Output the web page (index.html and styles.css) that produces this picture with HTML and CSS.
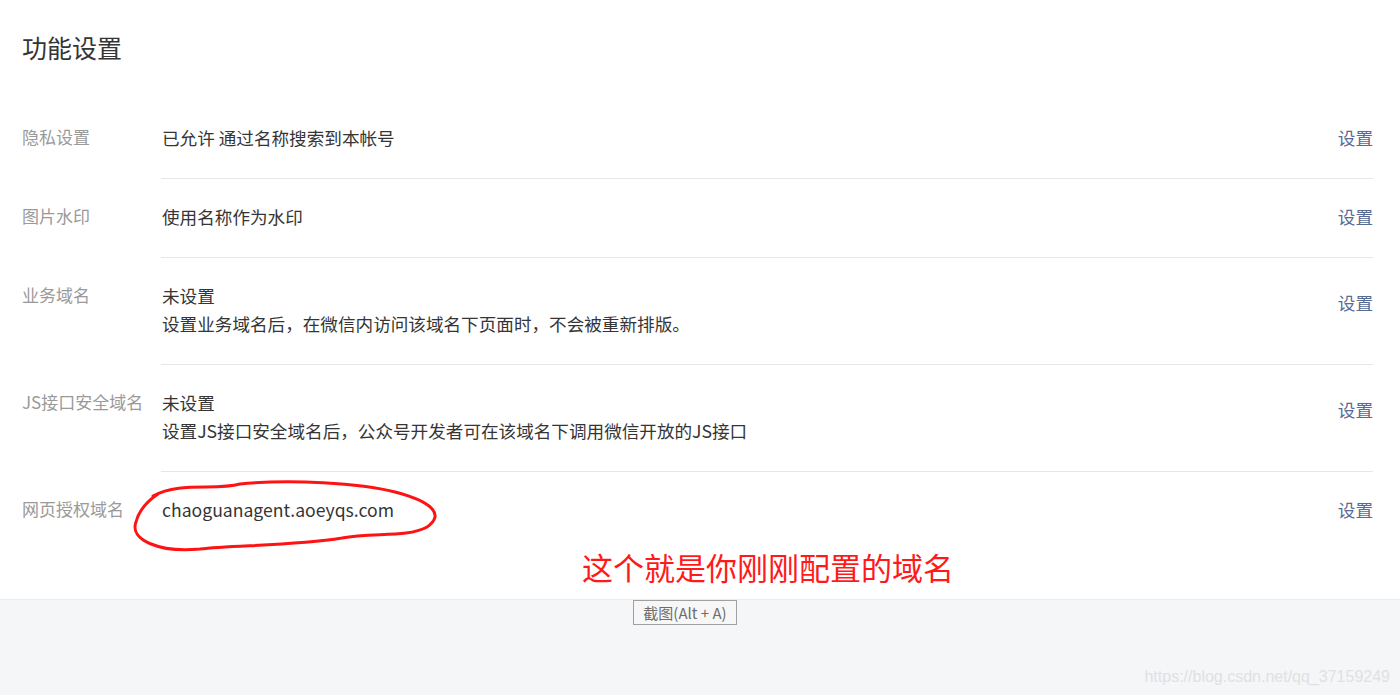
FILE: index.html
```html
<!DOCTYPE html>
<html lang="zh-CN">
<head>
<meta charset="utf-8">
<title>功能设置</title>
<link rel="stylesheet" href="styles.css">
</head>
<body>
<div class="page">
  <section class="panel">
    <h2 class="title">功能设置</h2>
    <div class="row">
      <div class="label">隐私设置</div>
      <div class="main first">
        <div class="content">已允许 通过名称搜索到本帐号</div>
        <a class="action">设置</a>
      </div>
    </div>
    <div class="row">
      <div class="label">图片水印</div>
      <div class="main">
        <div class="content">使用名称作为水印</div>
        <a class="action">设置</a>
      </div>
    </div>
    <div class="row">
      <div class="label">业务域名</div>
      <div class="main multi">
        <div class="content">未设置<br>设置业务域名后，在微信内访问该域名下页面时，不会被重新排版。</div>
        <a class="action">设置</a>
      </div>
    </div>
    <div class="row">
      <div class="label">JS接口安全域名</div>
      <div class="main multi">
        <div class="content">未设置<br>设置JS接口安全域名后，公众号开发者可在该域名下调用微信开放的JS接口</div>
        <a class="action">设置</a>
      </div>
    </div>
    <div class="row">
      <div class="label">网页授权域名</div>
      <div class="main">
        <div class="content">chaoguanagent.aoeyqs.com</div>
        <a class="action">设置</a>
      </div>
    </div>
    <svg class="circle" width="1400" height="600" viewBox="0 0 1400 600" aria-hidden="true">
      <path d="M153 496 C 180 481, 215 491, 240 484 C 290 479, 360 483, 395 492 C 430 501, 446 514, 427 527 C 407 538, 372 532, 342 538 C 292 546, 232 545, 200 549 C 160 553, 129 540, 136 522 C 139 510, 146 502, 158 494" fill="none" stroke="#ff1212" stroke-width="3" stroke-linecap="round"/>
    </svg>
    <div class="note">这个就是你刚刚配置的域名</div>
  </section>
  <div class="footer">
    <div class="tip">截图(Alt + A)</div>
    <div class="watermark">https://blog.csdn.net/qq_37159249</div>
  </div>
</div>
</body>
</html>
```
FILE: styles.css
```css
html, body {
  margin: 0;
  padding: 0;
}
body {
  font-family: "Noto Sans CJK SC", "Noto Sans", sans-serif;
  background: #f5f6f7;
  color: #353535;
}
.page {
  position: relative;
  width: 1400px;
  height: 695px;
  overflow: hidden;
}
.panel {
  position: relative;
  background: #fff;
  height: 600px;
  box-sizing: border-box;
  padding: 0 27px 0 22px;
  border-bottom: 1px solid #ececec;
}
.title {
  margin: 0;
  padding: 29px 0 34px;
  font-size: 25px;
  line-height: 36px;
  font-weight: normal;
  color: #353535;
}
.row {
  display: flex;
}
.label {
  width: 139px;
  flex: none;
  padding-top: 24px;
  font-size: 17px;
  line-height: 28px;
  color: #9a9a9a;
  white-space: nowrap;
}
.main {
  flex: 1;
  display: flex;
  align-items: center;
  border-top: 1px solid #e7e7eb;
  padding: 24px 0 26px 1px;
}
.main.first {
  border-top-color: transparent;
}
.content {
  flex: 1;
  font-size: 17.6px;
  line-height: 28px;
  color: #353535;
}
.action {
  font-size: 17.6px;
  line-height: 28px;
  color: #576b95;
  cursor: pointer;
}
.multi .action {
  margin-bottom: 14px;
}
.circle {
  position: absolute;
  left: 0;
  top: 0;
  pointer-events: none;
}
.note {
  position: absolute;
  left: 582px;
  top: 546px;
  font-size: 31px;
  line-height: 42px;
  color: #ff1a1a;
}
.footer {
  position: relative;
  height: 94px;
}
.tip {
  position: absolute;
  left: 633px;
  top: 0;
  width: 102px;
  height: 23px;
  border: 1px solid #a0a0a0;
  background: #f7f7f7;
  font-size: 15px;
  line-height: 23px;
  color: #6e6e6e;
  text-align: center;
}
.watermark {
  position: absolute;
  right: 10px;
  bottom: 7px;
  font-family: "Liberation Sans", Arial, sans-serif;
  font-size: 16px;
  line-height: 20px;
  color: #dfe1e4;
}
```
